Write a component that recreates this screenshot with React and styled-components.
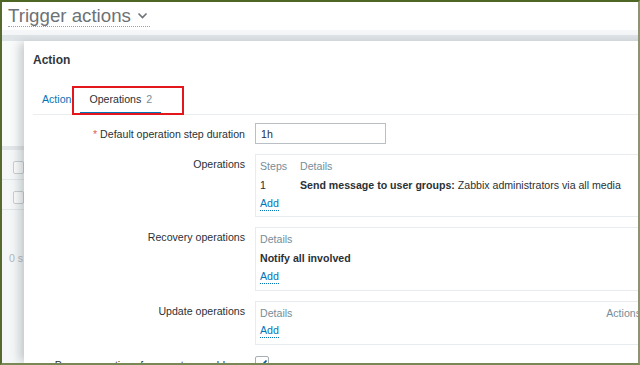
import React from "react";
import styled, { createGlobalStyle } from "styled-components";

const GlobalStyle = createGlobalStyle`
  body {
    margin: 0;
    background: #fff;
    font-family: "Liberation Sans", Arial, sans-serif;
  }
`;

const Frame = styled.div`
  width: 640px;
  height: 365px;
  box-sizing: border-box;
  border: 2px solid;
  border-color: #4d6624 #8c9472 #7a8856 #566a2e;
  overflow: hidden;
  display: flex;
  flex-direction: column;
  background: #fff;
  color: #2a3136;
  font-size: 10.6px;
  line-height: 14px;
`;

const TitleBar = styled.header`
  height: 28px;
  flex: none;
  padding-left: 6px;
  display: flex;
  align-items: center;
`;

const Title = styled.h1`
  margin: 0;
  font-size: 18.7px;
  font-weight: normal;
  line-height: 21px;
  color: #6d7276;
  display: flex;
  align-items: center;
  gap: 6px;
  padding-right: 2px;
  border-bottom: 1px dotted #9aa0a4;
`;

const Band = styled.div`
  height: 11px;
  flex: none;
  background: linear-gradient(#f5f6f7 0 5px, #dfe4e7 5px 11px);
`;

const Stage = styled.div`
  flex: 1;
  display: flex;
  min-height: 0;
`;

const Backdrop = styled.div`
  width: 22px;
  flex: none;
  background: #f4f6f7;
  display: flex;
  flex-direction: column;
  color: #b2b7ba;
`;

const BackdropTop = styled.div`
  height: 105px;
  background: #f9fafa;
`;

const BackdropHead = styled.div`
  height: 4px;
  background: #e3e6e8;
`;

const BackdropRow = styled.div`
  height: 30px;
  border-bottom: 1px solid #e3e6e8;
  display: flex;
  align-items: flex-end;
  padding: 0 0 5px 11px;
  box-sizing: border-box;
`;

const FakeCheck = styled.span`
  width: 13px;
  height: 13px;
  box-sizing: border-box;
  border: 1px solid #c9ced1;
  border-radius: 2px;
  background: #fbfbfb;
`;

const BackdropFoot = styled.div`
  padding: 41px 0 0 7px;
  font-size: 10.6px;
  white-space: nowrap;
`;

const Dialog = styled.section`
  width: 640px;
  flex: none;
  background: #fff;
  box-shadow: -6px 0 9px -2px rgba(60, 80, 90, 0.28);
  position: relative;
`;

const DialogTitle = styled.h2`
  margin: 0;
  padding: 12px 9px 0;
  font-size: 12px;
  line-height: 14px;
  font-weight: bold;
  color: #30373c;
`;

const TabList = styled.nav`
  margin: 19px 9px 0;
  display: flex;
  border-bottom: 1px solid #ebeef0;
`;

const Tab = styled.span`
  position: relative;
  height: 28px;
  padding: 0 9px;
  display: flex;
  align-items: center;
  gap: 5px;
  box-sizing: border-box;
  color: ${(p) => (p.$active ? "#2a3136" : "#0275b8")};
  border-bottom: 2px solid ${(p) => (p.$active ? "#0275b8" : "transparent")};

  ${(p) =>
    p.$marked &&
    `
    &::after {
      content: "";
      position: absolute;
      left: -8px;
      right: -23px;
      top: 0;
      bottom: -3px;
      border: 2px solid #e3161b;
    }
  `}
`;

const Count = styled.span`
  color: #768d99;
`;

const Form = styled.div`
  margin-top: 8px;
  display: grid;
  grid-template-columns: 221px 1fr;
  column-gap: 10px;
  row-gap: 10px;
  padding-right: 18px;
`;

const Label = styled.label`
  text-align: right;
  color: #2a3136;
  align-self: ${(p) => (p.$center ? "center" : "start")};
  padding-top: ${(p) => (p.$center ? "0" : "3px")};
  white-space: nowrap;
`;

const Required = styled.span`
  color: #e45959;
  margin-right: 3px;
`;

const TextInput = styled.div`
  width: 131px;
  height: 21px;
  box-sizing: border-box;
  border: 1px solid #b8c0c5;
  padding: 0 5px;
  display: flex;
  align-items: center;
  color: #2a3136;
`;

const Box = styled.div`
  border: 1px solid #e9ecee;
  padding: 4px 4px ${(p) => p.$bottom || 6}px;
  display: flex;
  flex-direction: column;
  gap: ${(p) => p.$gap || 5}px;
`;

const OpTable = styled.div`
  display: grid;
  grid-template-columns: 40px 1fr;
  row-gap: 5px;
`;

const HeadRow = styled.div`
  display: flex;
  justify-content: space-between;
`;

const Head = styled.span`
  color: #768d99;
`;

const Strong = styled.b`
  font-weight: bold;
  color: #2a3136;
`;

const AddLink = styled.a`
  align-self: flex-start;
  color: #0275b8;
  text-decoration: none;
  border-bottom: 1px dotted #0275b8;
  line-height: 13px;
`;

const CheckRow = styled.div`
  display: flex;
  align-items: flex-start;
`;

const CheckBox = styled.span`
  width: 14px;
  height: 14px;
  margin-top: 1px;
  box-sizing: border-box;
  border: 1px solid #a5aeb3;
  border-radius: 2px;
  display: flex;
  align-items: center;
  justify-content: center;
`;

const Chevron = () => (
  <svg width="11" height="7" viewBox="0 0 11 7">
    <polyline points="1.5,1.5 5.5,5.5 9.5,1.5" fill="none" stroke="#6d7276" strokeWidth="1.6" />
  </svg>
);

const Tick = () => (
  <svg width="11" height="9" viewBox="0 0 11 9">
    <polyline points="1.5,4.5 4.2,7.2 9.5,1.5" fill="none" stroke="#0a5f9e" strokeWidth="1.8" />
  </svg>
);

const App = () => (
  <>
    <GlobalStyle />
    <Frame>
      <TitleBar>
        <Title>
          Trigger actions
          <Chevron />
        </Title>
      </TitleBar>
      <Band />
      <Stage>
        <Backdrop>
          <BackdropTop />
          <BackdropHead />
          <BackdropRow>
            <FakeCheck />
          </BackdropRow>
          <BackdropRow>
            <FakeCheck />
          </BackdropRow>
          <BackdropFoot>0 s</BackdropFoot>
        </Backdrop>
        <Dialog>
          <DialogTitle>Action</DialogTitle>
          <TabList>
            <Tab>Action</Tab>
            <Tab $active $marked>
              Operations <Count>2</Count>
            </Tab>
          </TabList>
          <Form>
            <Label $center>
              <Required>*</Required>Default operation step duration
            </Label>
            <TextInput>1h</TextInput>

            <Label>Operations</Label>
            <Box $bottom={5}>
              <OpTable>
                <Head>Steps</Head>
                <Head>Details</Head>
                <span>1</span>
                <span>
                  <Strong>Send message to user groups:</Strong> Zabbix administrators via all media
                </span>
              </OpTable>
              <AddLink>Add</AddLink>
            </Box>

            <Label>Recovery operations</Label>
            <Box>
              <Head>Details</Head>
              <Strong>Notify all involved</Strong>
              <AddLink>Add</AddLink>
            </Box>

            <Label>Update operations</Label>
            <Box $gap={4}>
              <HeadRow>
                <Head>Details</Head>
                <Head>Actions</Head>
              </HeadRow>
              <AddLink>Add</AddLink>
            </Box>

            <Label>Pause operations for symptom problems</Label>
            <CheckRow>
              <CheckBox>
                <Tick />
              </CheckBox>
            </CheckRow>
          </Form>
        </Dialog>
      </Stage>
    </Frame>
  </>
);

export default App;
